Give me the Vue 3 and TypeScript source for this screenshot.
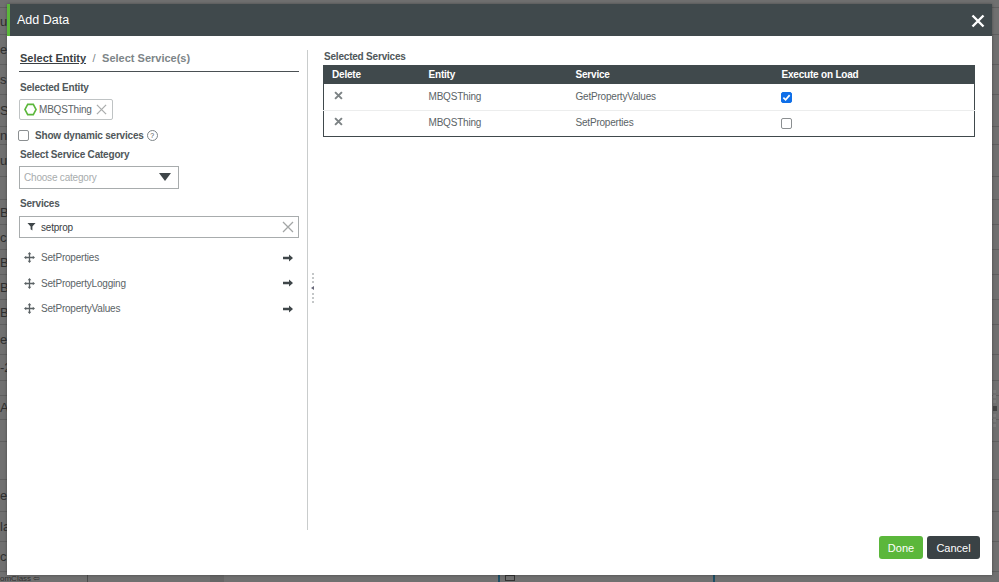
<script setup lang="ts">
interface SelectedService {
  entity: string
  service: string
  onLoad: boolean
}

interface BgRow {
  text: string
  height: number
}

// what peeks out from the page behind the dialog, on its left side
const bgRows: BgRow[] = [
  { text: '', height: 8 },
  { text: 'u', height: 27 },
  { text: 'e', height: 30 },
  { text: 's', height: 30 },
  { text: 'S', height: 32 },
  { text: 'n', height: 18 },
  { text: 'ul', height: 32 },
  { text: '', height: 23 },
  { text: 'B', height: 25 },
  { text: 'c', height: 25 },
  { text: 'B', height: 25 },
  { text: 'B', height: 25 },
  { text: 'Bu', height: 25 },
  { text: 'e', height: 30 },
  { text: '-2', height: 26 },
  { text: '', height: 15 },
  { text: 'A', height: 24 },
  { text: '', height: 22 },
  { text: '', height: 38 },
  { text: 'e', height: 32 },
  { text: 'la', height: 30 },
  { text: 'cr', height: 30 }
]

const services = ['SetProperties', 'SetPropertyLogging', 'SetPropertyValues']

const selected: SelectedService[] = [
  { entity: 'MBQSThing', service: 'GetPropertyValues', onLoad: true },
  { entity: 'MBQSThing', service: 'SetProperties', onLoad: false }
]
</script>

<template>
  <div class="page">
    <div class="backdrop">
      <div
        v-for="(row, i) in bgRows"
        :key="i"
        class="bg-row"
        :style="{ height: row.height + 'px', lineHeight: row.height + 'px' }"
      >{{ row.text }}</div>
      <div class="bg-foot">
        <span class="foot-a">omClass ⇦</span>
        <span class="foot-b"></span>
        <span class="foot-c"><i></i></span>
      </div>
    </div>

    <div class="bg-grip">
      <i></i><i></i><i></i>
      <b></b>
      <i></i><i></i><i></i>
    </div>

    <div class="modal">
      <header class="modal-head">
        <span class="modal-title">Add Data</span>
        <svg class="modal-close" viewBox="0 0 14 14" width="14" height="14">
          <path d="M1.5 1.5 12.5 12.5M12.5 1.5 1.5 12.5" stroke="#fff" stroke-width="2.4" fill="none" />
        </svg>
      </header>

      <div class="modal-body">
        <aside class="left">
          <div class="crumbs">
            <span class="crumb-active">Select Entity</span>
            <span class="crumb-sep">/</span>
            <span class="crumb-next">Select Service(s)</span>
          </div>

          <div class="field-label first">Selected Entity</div>
          <div class="chip">
            <svg viewBox="0 0 14 14" width="13" height="13">
              <path d="M4 1.5h6L13 7l-3 5.500H4L1 7z" fill="none" stroke="#5bb73b" stroke-width="1.700" />
            </svg>
            <span>MBQSThing</span>
            <svg class="chip-x" viewBox="0 0 12 12" width="11" height="11">
              <path d="M1 1 11 11M11 1 1 11" stroke="#aaadad" stroke-width="1.400" fill="none" />
            </svg>
          </div>

          <label class="dyn">
            <span class="check"></span>
            <span class="dyn-text">Show dynamic services</span>
            <span class="help">?</span>
          </label>

          <div class="field-label cat">Select Service Category</div>
          <div class="select">
            <span>Choose category</span>
            <span class="caret"></span>
          </div>

          <div class="field-label srv">Services</div>
          <div class="filter">
            <svg viewBox="0 0 10 10" width="9" height="9">
              <path d="M0.500 1h9L6 5v4.500L4 8V5z" fill="#3f4649" />
            </svg>
            <span class="filter-text">setprop</span>
            <svg class="filter-x" viewBox="0 0 12 12" width="12" height="12">
              <path d="M1 1 11 11M11 1 1 11" stroke="#a3a6a6" stroke-width="1.300" fill="none" />
            </svg>
          </div>

          <ul class="svc-list">
            <li v-for="s in services" :key="s" class="svc">
              <svg viewBox="0 0 12 12" width="11" height="11">
                <path d="M6 0 8 2.400H6.700V5.300H9.600V4L12 6 9.600 8V6.700H6.700V9.600H8L6 12 4 9.600H5.300V6.700H2.400V8L0 6 2.400 4V5.300H5.300V2.400H4z" fill="#5a6164" />
              </svg>
              <span class="svc-name">{{ s }}</span>
              <svg class="svc-arrow" viewBox="0 0 10 8" width="10" height="8">
                <path d="M0 2.800h6V0.500L10 4 6 7.500V5.200H0z" fill="#3f4649" />
              </svg>
            </li>
          </ul>
        </aside>

        <div class="splitter">
          <div class="grip">
            <i></i><i></i><i></i>
            <b></b>
            <i></i><i></i><i></i>
          </div>
        </div>

        <section class="right">
          <div class="sel-title">Selected Services</div>
          <table class="sel-table">
            <colgroup>
              <col class="c1" /><col class="c2" /><col class="c3" /><col />
            </colgroup>
            <thead>
              <tr>
                <th>Delete</th>
                <th>Entity</th>
                <th>Service</th>
                <th>Execute on Load</th>
              </tr>
            </thead>
            <tbody>
              <tr v-for="row in selected" :key="row.service">
                <td>
                  <svg class="del" viewBox="0 0 10 10" width="9" height="9">
                    <path d="M1.200 1.200 8.800 8.800M8.800 1.200 1.200 8.800" stroke="#7c8284" stroke-width="2.200" fill="none" />
                  </svg>
                </td>
                <td>{{ row.entity }}</td>
                <td>{{ row.service }}</td>
                <td>
                  <span v-if="row.onLoad" class="check on">
                    <svg viewBox="0 0 10 10" width="9" height="9">
                      <path d="M1.500 5.200 4 7.600 8.500 2.400" stroke="#fff" stroke-width="1.900" fill="none" />
                    </svg>
                  </span>
                  <span v-else class="check"></span>
                </td>
              </tr>
            </tbody>
          </table>
        </section>
      </div>

      <footer class="modal-foot">
        <button class="btn done">Done</button>
        <button class="btn cancel">Cancel</button>
      </footer>
    </div>
  </div>
</template>

<style>
html,
body {
  margin: 0;
  background: #707070;
}
</style>

<style scoped>
.page {
  position: relative;
  width: 999px;
  height: 582px;
  overflow: hidden;
  background: #707070;
  font-family: "Liberation Sans", Arial, sans-serif;
}

.backdrop {
  display: flex;
  flex-direction: column;
  height: 100%;
  color: #2f2f2f;
  font-size: 13px;
}

.bg-row {
  flex: none;
  box-sizing: border-box;
  border-bottom: 1px solid #5f5f5f;
  white-space: nowrap;
}

.bg-foot {
  margin-top: auto;
  display: flex;
  height: 7px;
  flex: none;
  overflow: hidden;
  font-size: 8px;
  line-height: 7px;
}

.foot-a {
  width: 88px;
  flex: none;
  box-sizing: border-box;
  border-right: 1px solid #4c4c4c;
}

.foot-b {
  width: 122px;
  flex: none;
  border-right: 14px solid #666;
}

.foot-c {
  margin-left: 274px;
  width: 217px;
  flex: none;
  box-sizing: border-box;
  border-left: 2px solid #1f4f66;
  border-right: 2px solid #1f4f66;
  padding-left: 5px;
}

.foot-c i {
  display: block;
  width: 10px;
  height: 6px;
  box-sizing: border-box;
  border: 1px solid #333;
}

.bg-grip {
  position: absolute;
  right: 2px;
  top: 390px;
  display: flex;
  flex-direction: column;
  gap: 2px;
}

.bg-grip i {
  width: 3px;
  height: 3px;
  background: #7c7c7c;
}

.bg-grip b {
  width: 4px;
  height: 5px;
  margin: 1px 0;
  background: #444;
}

.modal {
  position: absolute;
  left: 7px;
  top: 4px;
  width: 985px;
  height: 571px;
  display: flex;
  flex-direction: column;
  background: #fff;
  color: #4a5053;
  font-size: 10px;
  letter-spacing: -0.2px;
  box-shadow: 0 0 3px rgba(0, 0, 0, 0.35);
}

.modal-head {
  height: 32px;
  flex: none;
  display: flex;
  align-items: center;
  justify-content: space-between;
  box-sizing: border-box;
  padding: 0 7px 0 7px;
  background: #40494c;
  border-left: 3px solid #5bb73b;
}

.modal-title {
  color: #fff;
  font-size: 12.5px;
  letter-spacing: 0;
}

.modal-close {
  display: block;
  margin-top: 1px;
}

.modal-body {
  flex: 1;
  min-height: 0;
  display: flex;
  padding-top: 14px;
}

.left {
  width: 280px;
  margin-left: 12px;
  flex: none;
}

.crumbs {
  display: flex;
  gap: 6.5px;
  padding-left: 1px;
  box-sizing: border-box;
  border-bottom: 1px solid #4a5053;
  font-size: 11px;
  font-weight: bold;
  line-height: 16px;
  letter-spacing: 0;
  color: #7d8588;
  height: 22px;
}

.crumb-active {
  color: #3a4043;
  text-decoration: underline;
}

.crumb-sep {
  font-weight: normal;
}

.field-label {
  font-size: 10px;
  font-weight: bold;
  color: #50575a;
  padding-left: 1px;
  line-height: 12px;
}

.field-label.first {
  margin-top: 10px;
}

.chip {
  display: inline-flex;
  align-items: center;
  gap: 2px;
  height: 21px;
  margin-top: 5px;
  padding: 0 5px 0 4px;
  box-sizing: border-box;
  border: 1px solid #bfc3c4;
  border-radius: 2px;
  color: #5b6366;
}

.chip-x {
  margin-left: 2px;
}

.dyn {
  display: flex;
  align-items: center;
  margin-top: 9px;
  margin-left: -1px;
  height: 13px;
}

.dyn-text {
  margin-left: 6px;
  font-weight: bold;
  color: #50575a;
}

.help {
  width: 9px;
  height: 9px;
  margin-left: 3px;
  border: 1px solid #7d8588;
  border-radius: 50%;
  font-size: 7px;
  line-height: 9px;
  text-align: center;
}

.check {
  display: inline-flex;
  align-items: center;
  justify-content: center;
  width: 9px;
  height: 9px;
  box-sizing: content-box;
  border: 1px solid #8b8f91;
  border-radius: 2px;
  background: #fff;
  vertical-align: middle;
}

.check.on {
  background: #0f6fe8;
  border-color: #0f6fe8;
}

.field-label.cat {
  margin-top: 7px;
}

.select {
  display: flex;
  align-items: center;
  justify-content: space-between;
  width: 160px;
  height: 23px;
  margin-top: 5px;
  padding: 0 7px 1px 4px;
  box-sizing: border-box;
  border: 1px solid #a8acad;
  color: #a8acad;
}

.caret {
  width: 0;
  height: 0;
  border-left: 6px solid transparent;
  border-right: 6px solid transparent;
  border-top: 8px solid #3f4649;
}

.field-label.srv {
  margin-top: 9px;
}

.filter {
  display: flex;
  align-items: center;
  height: 22px;
  margin-top: 6px;
  padding: 0 4px 0 7px;
  box-sizing: border-box;
  border: 1px solid #a8acad;
}

.filter svg:first-child {
  margin-top: -2px;
}

.filter-text {
  margin-left: 5px;
  color: #3a4043;
}

.filter-x {
  margin-left: auto;
}

.svc-list {
  list-style: none;
  margin: 7px 0 0;
  padding: 0;
}

.svc {
  display: flex;
  align-items: center;
  height: 25.500px;
  padding: 0 6px 0 5px;
  color: #5b6366;
}

.svc-name {
  margin-left: 6px;
}

.svc-arrow {
  margin-left: auto;
}

.splitter {
  flex: none;
  width: 16px;
  margin-left: 8px;
  margin-bottom: 6px;
  border-left: 1px solid #c9cccc;
  box-sizing: border-box;
}

.grip {
  display: flex;
  flex-direction: column;
  align-items: flex-start;
  gap: 2px;
  margin: 223px 0 0 4px;
  width: 3px;
}

.grip i {
  width: 2px;
  height: 2px;
  background: #c4c7c8;
}

.grip b {
  width: 0;
  height: 0;
  margin: 1px 0 1px -1px;
  border-top: 2.500px solid transparent;
  border-bottom: 2.500px solid transparent;
  border-right: 3px solid #667;
}

.right {
  flex: 1;
  min-width: 0;
  padding: 1px 17px 0 0;
}

.sel-title {
  font-weight: bold;
  line-height: 12px;
  padding-left: 1px;
  color: #50575a;
}

.sel-table {
  width: 100%;
  margin-top: 2px;
  border-collapse: collapse;
  table-layout: fixed;
  border: 1px solid #40494c;
}

.c1 {
  width: 97px;
}

.c2 {
  width: 147px;
}

.c3 {
  width: 206px;
}

.sel-table th {
  height: 17px;
  padding: 0 0 1px 8px;
  text-align: left;
  background: #40494c;
  color: #fff;
  font-size: 10px;
  font-weight: bold;
}

.sel-table td {
  height: 24px;
  padding: 0 0 2px 8px;
  color: #5b6366;
  border-top: 1px solid #eceded;
}

.sel-table tbody tr:first-child td {
  border-top: 0;
}

.sel-table tbody tr:last-child td {
  height: 23px;
}

.sel-table .check {
  margin-left: -1px;
  margin-top: 1px;
}

.sel-table .check.on {
  margin-top: 3px;
}

.del {
  display: block;
  margin: -2px 0 0 2px;
}

.modal-foot {
  display: flex;
  justify-content: flex-end;
  gap: 4px;
  height: 39px;
  flex: none;
  padding-right: 12px;
}

.btn {
  height: 23px;
  border: 0;
  border-radius: 3px;
  color: #fff;
  font-family: inherit;
  font-size: 11px;
  padding: 0;
}

.done {
  width: 44px;
  background: #5bb73b;
}

.cancel {
  width: 53px;
  background: #3a4245;
}
</style>
